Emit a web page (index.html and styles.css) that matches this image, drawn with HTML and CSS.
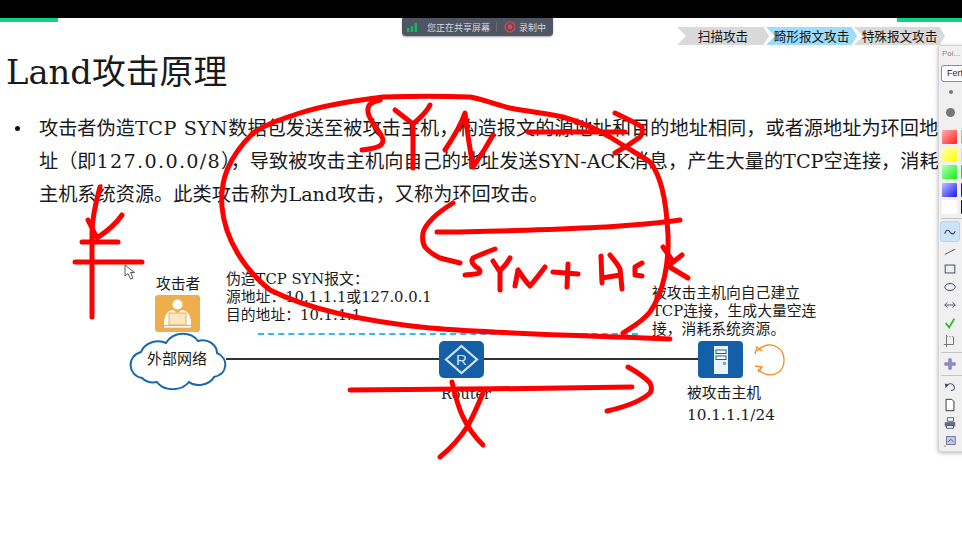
FILE: index.html
```html
<!DOCTYPE html>
<html lang="zh">
<head>
<meta charset="utf-8">
<title>Land攻击原理</title>
<link rel="stylesheet" href="styles.css">
</head>
<body>
<div class="screen">
  <header class="topbar"></header>
  <div class="accent accent-left"></div>
  <div class="accent accent-right"></div>

  <div class="share-pill">
    <svg class="signal" viewBox="0 0 12 10" width="12" height="10"><path d="M1 6h2.400v4H1zM4.800 4h2.400v6H4.800zM8.600 1H11v9H8.600z" fill="#18b566"/></svg>
    <span class="share-text">您正在共享屏幕</span>
    <span class="pill-sep"></span>
    <svg class="rec" viewBox="0 0 12 12" width="12" height="12"><circle cx="6" cy="6" r="5" fill="none" stroke="#e8434a" stroke-width="1.200"/><circle cx="6" cy="6" r="2.400" fill="#e8434a"/></svg>
    <span class="share-text">录制中</span>
  </div>

  <nav class="tabs">
    <span class="tab tab-first">扫描攻击</span>
    <span class="tab tab-active">畸形报文攻击</span>
    <span class="tab">特殊报文攻击</span>
  </nav>

  <main class="slide">
    <h1 class="title">Land攻击原理</h1>
    <div class="points">
      <span class="bullet"></span>
      <p class="point-text">攻击者伪造<span class="latin-wide">TCP SYN</span>数据包发送至被攻击主机，构造报文的源地址和目的地址相同，或者源地址为环回地<br>址（即<span class="digits-wide">127.0.0.0/8</span>），导致被攻击主机向自己的地址发送SYN-ACK消息，产生大量的TCP空连接，消耗<br>主机系统资源。此类攻击称为Land攻击，又称为环回攻击。</p>
    </div>
  </main>

  <section class="diagram">
    <span class="label attacker-label">攻击者</span>
    <div class="node attacker-icon">
      <svg viewBox="0 0 45 37" width="45" height="37">
        <circle cx="22.500" cy="9.500" r="5" fill="#fff"/>
        <path d="M9 30c0-10 3-14 9-15l4.500 3 4.500-3c6 1 9 5 9 15z" fill="#fff"/>
        <rect x="14" y="18" width="17" height="12" fill="#fbe6c2" stroke="#eeae4d"/>
        <rect x="9" y="31" width="27" height="1.600" fill="#fff"/>
      </svg>
    </div>
    <div class="node cloud">
      <svg viewBox="0 0 98 58" width="98" height="58">
        <path d="M13 46C-1 44 -3 24 12 20C16 10 29 7 37 11C44 -1 62 -1 69 9C79 6 88 13 88 21C100 26 99 42 85 45C80 54 66 55 60 50C52 60 34 59 28 50C23 51 17 50 13 46Z" fill="#fff" stroke="#1a66ad" stroke-width="2"/>
      </svg>
      <span class="cloud-text">外部网络</span>
    </div>
    <div class="wire"></div>
    <div class="dash"></div>
    <div class="forge-text">伪造TCP SYN报文：<br>源地址：10.1.1.1或127.0.0.1<br>目的地址：10.1.1.1</div>
    <div class="node router">
      <svg viewBox="0 0 45 37" width="45" height="37">
        <path d="M22.500 5L38 18.500 22.500 32 7 18.500Z" fill="none" stroke="#cfe3f4" stroke-width="2.200"/>
        <text x="22.500" y="24" class="router-r">R</text>
      </svg>
    </div>
    <span class="label router-label">Router</span>
    <div class="victim-text">被攻击主机向自己建立<br>TCP连接，生成大量空连<br>接，消耗系统资源。</div>
    <div class="node server">
      <svg viewBox="0 0 45 37" width="45" height="37">
        <rect x="16" y="5" width="14" height="28" fill="#eaf2f9"/>
        <rect x="18" y="9" width="10" height="3.500" fill="#fff" stroke="#1460a8"/>
        <rect x="18" y="15" width="10" height="3.500" fill="#fff" stroke="#1460a8"/>
        <rect x="25" y="21" width="3" height="3" fill="#7fa8cc"/>
      </svg>
    </div>
    <svg class="node loop" viewBox="0 0 34 36" width="34" height="36">
      <path d="M4 9C9 3 18 1 24 5C33 10 33 24 26 30C19 35 10 33 5 27" fill="none" stroke="#f58a1f" stroke-width="1.300"/>
      <path d="M2 12L4 5 9 9M2 24L9 25 5 30" fill="none" stroke="#f58a1f" stroke-width="1.300"/>
    </svg>
    <div class="victim-name">被攻击主机<br><span class="victim-ip">10.1.1.1/24</span></div>
  </section>

  <svg class="cursor" viewBox="0 0 12 16" width="12" height="16">
    <path d="M1 1L1 12 4 9.500 6.500 15 9 14 6.500 8.500 10.500 8.500Z" fill="#fff" stroke="#555" stroke-width="1"/>
  </svg>

  <svg class="ink" viewBox="0 0 962 536" width="962" height="536">
    <g fill="none" stroke="#ff0000" stroke-width="5" stroke-linecap="round" stroke-linejoin="round">
      <path d="M100 187C95 205 92 220 92 233C92 260 92 290 92 317"/>
      <path d="M88 220L97 238C106 232 116 224 122 215"/>
      <path d="M82 242H118"/>
      <path d="M75 262H142"/>
      <path d="M670 339C600 336 500 334 430 328C370 322 310 310 270 290C245 270 225 240 222 207C220 180 228 158 253 133C270 122 285 118 300 113C325 105 350 101 383 97C410 96 445 96 470 97C485 100 495 104 510 108C530 112 545 113 563 117C580 122 595 128 610 137C630 150 640 155 650 162C660 175 666 195 668 235C669 262 664 292 650 312C642 322 632 327 623 333"/>
      <path d="M380 100C372 102 367 104 368 112C369 122 382 132 383 140C383 146 378 148 362 150"/>
      <path d="M395 110L413 124C420 118 427 112 430 105M413 125L413 168"/>
      <path d="M445 150C453 138 461 125 465 113C467 130 470 150 473 167C480 157 487 146 493 135"/>
      <path d="M528 132H625"/>
      <path d="M615 113C625 118 635 122 642 127C643 132 642 135 640 137C632 143 624 148 615 153"/>
      <path d="M453 203C445 208 438 213 433 218C428 223 424 228 423 233C422 240 423 244 425 247C429 252 434 255 440 258L460 263"/>
      <path d="M437 232C470 232 500 231 533 230C585 228 640 226 680 220"/>
      <path d="M495 249C487 252 479 255 473 258C471 261 472 263 474 265C477 268 480 269 480 271C480 274 478 274 465 275"/>
      <path d="M493 261L500 272M510 258C507 263 503 268 500 270V290"/>
      <path d="M518 270L515 286M518 270C522 276 526 282 530 286C535 280 540 274 545 267"/>
      <path d="M553 272L578 274M568 264L567 287"/>
      <path d="M602 283L601 256M610 255C614 260 618 264 620 269L622 289M602 278L620 275"/>
      <path d="M642 263L635 267V275L642 276"/>
      <path d="M682 255L668 266 688 278M663 247L672 260"/>
      <path d="M350 390C420 390 560 388 632 387"/>
      <path d="M628 367C637 372 645 377 650 383C652 387 652 390 650 393C640 402 625 407 607 411"/>
      <path d="M452 382C455 395 458 407 463 417C468 428 475 437 483 445"/>
      <path d="M483 393C478 405 473 417 467 427C460 438 451 448 440 457"/>
    </g>
  </svg>

  <aside class="pointer-bar">
    <div class="bar-title">Poi...</div>
    <div class="bar-input">Fert</div>
    <div class="bar-row"><span class="dot dot-small"></span><span class="size-on"></span></div>
    <div class="bar-row"><span class="dot dot-big"></span></div>
    <div class="swatches">
      <span class="swatch swatch-red"></span><span class="swatch swatch-pink"></span>
      <span class="swatch swatch-yellow"></span><span class="swatch swatch-yellow2"></span>
      <span class="swatch swatch-green"></span><span class="swatch swatch-green2"></span>
      <span class="swatch swatch-blue"></span><span class="swatch swatch-blue2"></span>
      <span class="swatch swatch-white"></span><span class="swatch swatch-black"></span>
    </div>
    <div class="bar-sep bar-sep-top"></div>
    <div class="tool tool-on">
      <svg viewBox="0 0 16 16" width="14" height="14"><path d="M2 10C4 4 7 6 8 8S12 12 14 7" fill="none" stroke="#333a55" stroke-width="1.200"/></svg>
    </div>
    <div class="tool"><svg viewBox="0 0 16 16" width="14" height="14"><path d="M2 12L14 6" stroke="#555a70" stroke-width="1.100"/></svg></div>
    <div class="tool"><svg viewBox="0 0 16 16" width="14" height="14"><rect x="2.500" y="3.500" width="11" height="9" fill="none" stroke="#444a66" stroke-width="1.100"/></svg></div>
    <div class="tool"><svg viewBox="0 0 16 16" width="14" height="14"><ellipse cx="8" cy="8" rx="6" ry="4" fill="none" stroke="#444a66" stroke-width="1.100"/></svg></div>
    <div class="tool"><svg viewBox="0 0 16 16" width="14" height="14"><path d="M2 8H14M5 5L2 8 5 11M11 5L14 8 11 11" fill="none" stroke="#444a66" stroke-width="1"/></svg></div>
    <div class="tool"><svg viewBox="0 0 16 16" width="14" height="14"><path d="M3 8L7 13 13 3" fill="none" stroke="#22c022" stroke-width="2"/></svg></div>
    <div class="tool"><svg viewBox="0 0 16 16" width="14" height="14"><path d="M1 12H12V3M4 1V15" fill="none" stroke="#666" stroke-width="1"/><path d="M4 3H12" stroke="#888" stroke-dasharray="1.500 1.500"/></svg></div>
    <div class="bar-sep"></div>
    <div class="tool"><svg viewBox="0 0 16 16" width="14" height="14"><path d="M6.500 2h3v4.500H14v3H9.500V14h-3V9.500H2v-3h4.500z" fill="#8e8fd0" stroke="#5e5f99" stroke-width=".6"/></svg></div>
    <div class="bar-sep"></div>
    <div class="tool"><svg viewBox="0 0 16 16" width="14" height="14"><path d="M4 6C7 3 12 4 13 8S10 12 9 12" fill="none" stroke="#555a70" stroke-width="1.200"/><path d="M2 4L7 5 3 9Z" fill="#444a66"/></svg></div>
    <div class="tool"><svg viewBox="0 0 16 16" width="14" height="14"><path d="M3.500 1.500H10L12.500 4V14.500H3.500Z" fill="#fff" stroke="#333" stroke-width="1.100"/></svg></div>
    <div class="tool"><svg viewBox="0 0 16 16" width="14" height="14"><path d="M5 2H12V6H5Z" fill="#fff" stroke="#444a66"/><path d="M2 7H14V12H2Z" fill="#666b88"/><path d="M4 11H12V14H4Z" fill="#fff" stroke="#444a66"/></svg></div>
    <div class="tool"><svg viewBox="0 0 16 16" width="14" height="14"><rect x="4" y="3" width="10" height="9" fill="#c8c8ec" stroke="#666a99"/><path d="M6 9L9 6 12 9" fill="none" stroke="#444a66"/><path d="M1 14H3" stroke="#777"/></svg></div>
  </aside>
</div>
</body>
</html>
```

FILE: styles.css
```css
html, body {
  margin: 0;
  padding: 0;
  background: #fff;
}

.screen {
  position: relative;
  width: 962px;
  height: 536px;
  overflow: hidden;
  background: #fff;
  font-family: "DejaVu Serif", "Noto Sans CJK SC", serif;
  color: #1a1a1a;
}

.topbar {
  height: 18px;
  background: #000;
}

.accent {
  position: absolute;
  top: 18px;
  height: 4px;
  background: #0fd27f;
}

.accent-left { left: 0; width: 58px; }
.accent-right { left: 897px; width: 65px; }

.share-pill {
  position: absolute;
  left: 402px;
  top: 18px;
  width: 151px;
  height: 18px;
  box-sizing: border-box;
  padding: 0 5px 0 4px;
  display: flex;
  align-items: center;
  background: #4f5563;
  border-radius: 0 0 4px 4px;
  box-shadow: 0 1px 2px rgba(0, 0, 0, .35);
}

.share-text {
  font: 9px "Noto Sans CJK SC", sans-serif;
  color: #d5d8de;
  white-space: nowrap;
}

.signal { margin-right: 9px; }
.pill-sep { width: 1px; height: 10px; background: #666c7a; margin: 0 7px 0 6px; }
.rec { margin-right: 3px; }

.tabs {
  position: absolute;
  left: 677px;
  top: 27px;
  display: flex;
}

.tab {
  width: 91px;
  height: 18px;
  margin-right: -3px;
  flex: none;
  display: flex;
  align-items: center;
  justify-content: center;
  font: 12.600px/18px "Noto Sans CJK SC", sans-serif;
  color: #111;
  background: #d9d9d9;
  white-space: nowrap;
  clip-path: polygon(0 0, 94% 0, 100% 50%, 94% 100%, 0 100%, 9px 50%);
}

.tab-first { width: 92px; }
.tab-active { background: #9bdcff; }

.slide {
  padding: 34px 0 0 6px;
}

.title {
  margin: 0;
  font-size: 33.800px;
  line-height: 42px;
  font-weight: 400;
}

.points {
  margin-top: 18px;
  display: flex;
  align-items: flex-start;
  white-space: nowrap;
}

.bullet {
  flex: none;
  width: 5px;
  height: 5px;
  margin: 14px 20px 0 9px;
  border-radius: 50%;
  background: #111;
}

.point-text {
  margin: 0 0 0 -1px;
  font-size: 19.200px;
  line-height: 33px;
}

.latin-wide { letter-spacing: .6px; }
.digits-wide { letter-spacing: 1.300px; }

.diagram {
  position: absolute;
  left: 0;
  top: 0;
  width: 962px;
  height: 536px;
  font-size: 14.800px;
  line-height: 18px;
}

.node, .label, .wire, .dash, .forge-text, .victim-text, .victim-name {
  position: absolute;
}

.label { white-space: nowrap; }

.attacker-label { left: 156px; top: 275px; }
.attacker-icon { left: 155px; top: 295px; width: 45px; height: 37px; background: #eeae4d; border-radius: 3px; }
.cloud { left: 129px; top: 332px; width: 98px; height: 58px; }
.cloud-text { position: absolute; left: 18px; top: 18px; font-size: 15px; white-space: nowrap; }
.wire { left: 226px; top: 358px; width: 474px; height: 2px; background: #333; }
.dash { left: 258px; top: 333px; width: 380px; border-top: 2px dashed #35b8f0; }
.forge-text { left: 226px; top: 270px; white-space: nowrap; }
.router { left: 439px; top: 341px; width: 45px; height: 37px; background: #1460a8; border-radius: 5px; }
.router-r { font: 15px "Liberation Sans", sans-serif; fill: #cfe3f4; text-anchor: middle; }
.router-label { left: 441px; top: 385px; font-size: 14.400px; }
.victim-text { left: 652px; top: 284px; white-space: nowrap; line-height: 18px; }
.server { left: 698px; top: 341px; width: 45px; height: 37px; background: #1460a8; border-radius: 4px; }
.loop { left: 753px; top: 342px; }
.victim-name { left: 687px; top: 382px; white-space: nowrap; line-height: 22px; }
.victim-ip { font-size: 15.300px; }

.cursor { position: absolute; left: 124px; top: 264px; }
.ink { position: absolute; left: 0; top: 0; pointer-events: none; }

.pointer-bar {
  position: absolute;
  left: 938px;
  top: 45px;
  width: 40px;
  height: 407px;
  box-sizing: border-box;
  background: #f0f0f0;
  border: 1px solid #d5d5d5;
  border-radius: 3px;
  box-shadow: 0 1px 4px rgba(0, 0, 0, .3);
  padding: 0 2px;
  display: flex;
  flex-direction: column;
  align-items: flex-start;
}

.bar-title { font: 8px/16px "Liberation Sans", sans-serif; color: #888; margin-left: 1px; height: 19px; }

.bar-input {
  width: 34px;
  height: 17px;
  box-sizing: border-box;
  padding-left: 5px;
  border: 1px solid #5a9bd8;
  border-radius: 3px;
  background: #fff;
  font: 9px/15px "Liberation Sans", sans-serif;
  color: #222;
}

.bar-row { height: 20px; width: 34px; display: flex; align-items: center; gap: 6px; padding-left: 5px; box-sizing: border-box; }
.dot { display: block; flex: none; border-radius: 50%; background: #777; }
.dot-small { width: 4px; height: 4px; margin: 0 3px; }
.dot-big { width: 9px; height: 9px; }
.size-on { display: block; flex: none; width: 12px; height: 16px; background: #cce4fa; border-radius: 2px; }

.swatches { display: grid; grid-template-columns: 15px 15px; column-gap: 4px; row-gap: 3.500px; margin: 8px 0 0 1px; }
.swatch { display: block; width: 15px; height: 14px; border-radius: 1px; }
.swatch-red { background: linear-gradient(135deg, #ffb0b0, #ff2020); }
.swatch-pink { background: #e8a0a8; }
.swatch-yellow { background: linear-gradient(135deg, #ffffb0, #ffff00); }
.swatch-yellow2 { background: #eeee00; }
.swatch-green { background: linear-gradient(135deg, #b8ffb8, #10f010); }
.swatch-green2 { background: #10e010; }
.swatch-blue { background: linear-gradient(135deg, #c0c0ff, #1818f0); }
.swatch-blue2 { background: #1010e0; }
.swatch-white { background: #fff; }
.swatch-black { background: #111; }

.bar-sep { width: 22px; height: 1px; background: #c4c4c4; margin: 2px 0; flex: none; }
.bar-sep-top { margin: 4px 0 2px; }

.tool {
  width: 18px;
  height: 18px;
  display: flex;
  align-items: center;
  justify-content: center;
  flex: none;
}

.tool-on { height: 19px; background: #cce4fa; border: 1px solid #b5d5f3; border-radius: 3px; margin-left: -1px; }
```
